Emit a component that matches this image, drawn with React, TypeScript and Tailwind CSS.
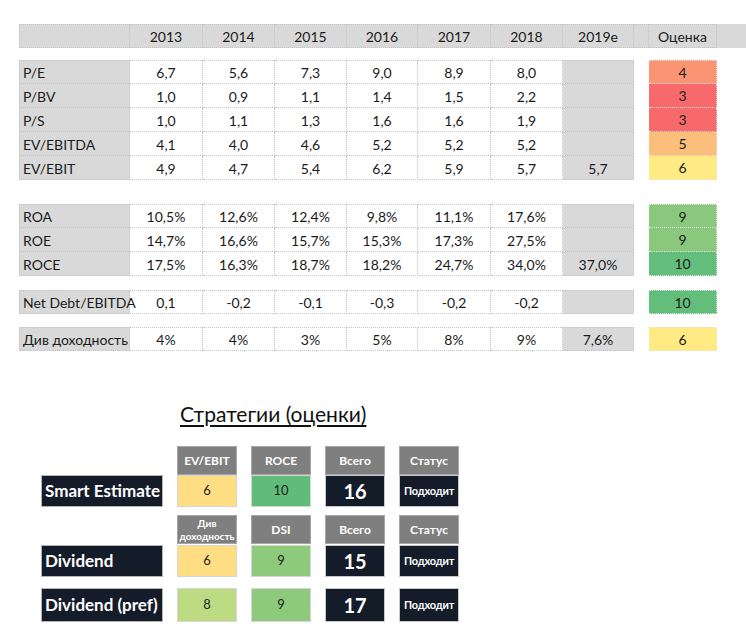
import React from "react";

type Row = [string, string, string, string, string, string, string, string, number];

const colW = [
  "w-[111px]",
  "w-[73px]",
  "w-[72px]",
  "w-[72px]",
  "w-[71px]",
  "w-[73px]",
  "w-[72px]",
  "w-[71px]",
];

const years = ["2013", "2014", "2015", "2016", "2017", "2018", "2019e"];

const rateBg: Record<number, string> = {
  3: "bg-[#f8696b]",
  4: "bg-[#fa9473]",
  5: "bg-[#fbbf7b]",
  6: "bg-[#ffea84]",
  9: "bg-[#8ac97d]",
  10: "bg-[#63be7b]",
};

const dot = "border-dotted border-[#c3c3c3]";

const blocks: Row[][] = [
  [
    ["P/E", "6,7", "5,6", "7,3", "9,0", "8,9", "8,0", "", 4],
    ["P/BV", "1,0", "0,9", "1,1", "1,4", "1,5", "2,2", "", 3],
    ["P/S", "1,0", "1,1", "1,3", "1,6", "1,6", "1,9", "", 3],
    ["EV/EBITDA", "4,1", "4,0", "4,6", "5,2", "5,2", "5,2", "", 5],
    ["EV/EBIT", "4,9", "4,7", "5,4", "6,2", "5,9", "5,7", "5,7", 6],
  ],
  [
    ["ROA", "10,5%", "12,6%", "12,4%", "9,8%", "11,1%", "17,6%", "", 9],
    ["ROE", "14,7%", "16,6%", "15,7%", "15,3%", "17,3%", "27,5%", "", 9],
    ["ROCE", "17,5%", "16,3%", "18,7%", "18,2%", "24,7%", "34,0%", "37,0%", 10],
  ],
  [["Net Debt/EBITDA", "0,1", "-0,2", "-0,1", "-0,3", "-0,2", "-0,2", "", 10]],
  [["Див доходность", "4%", "4%", "3%", "5%", "8%", "9%", "7,6%", 6]],
];

const blockGap = ["mt-3", "mt-6", "mt-[14px]", "mt-[13px]"];

function Block({ rows, first }: { rows: Row[]; first: string }) {
  return (
    <div className={first}>
      {rows.map((r, ri) => {
        const top = ri === 0 ? "border-t" : "";
        return (
          <div key={r[0]} className="flex h-6">
            <div
              className={`${colW[0]} ${top} border-l border-r border-b ${dot} bg-[#d9d9d9] flex items-end pl-[3px] whitespace-nowrap`}
            >
              {r[0]}
            </div>
            {r.slice(1, 7).map((v, i) => (
              <div
                key={i}
                className={`${colW[i + 1]} ${top} border-r border-b ${dot} flex items-center justify-center pt-[1px]`}
              >
                {v}
              </div>
            ))}
            <div
              className={`${colW[7]} ${top} border-r border-b ${dot} bg-[#d9d9d9] flex items-end justify-center`}
            >
              {r[7]}
            </div>
            <div className="w-[15px]" />
            <div
              className={`w-[68px] ${top} border-r border-b border-dotted border-[#e6e6e6] ${rateBg[r[8]]} flex items-center justify-center`}
            >
              {r[8]}
            </div>
          </div>
        );
      })}
    </div>
  );
}

function Head({ children }: { children: React.ReactNode }) {
  return (
    <div className="w-[60px] h-[29px] bg-[#7f7f7f] border border-[#a6a6a6] flex items-center justify-center text-white font-bold text-[12px] leading-none text-center">
      {children}
    </div>
  );
}

function Val({ bg, children }: { bg: string; children: React.ReactNode }) {
  return (
    <div
      className={`w-[60px] h-full ${bg} border border-[#d6d6d6] flex items-center justify-center text-[13px] text-[#1d1d1d]`}
    >
      {children}
    </div>
  );
}

function Dark({ children, cls }: { children: React.ReactNode; cls: string }) {
  return (
    <div
      className={`w-[60px] h-full bg-[#141c2a] border border-[#c8c8c8] flex items-center justify-center text-white font-bold ${cls}`}
    >
      {children}
    </div>
  );
}

function Label({ children }: { children: React.ReactNode }) {
  return (
    <div className="w-[122px] h-full bg-[#141c2a] border border-[#b5b5b5] flex items-center pl-[3px] text-white font-bold text-[17px] whitespace-nowrap">
      {children}
    </div>
  );
}

export default function App() {
  return (
    <div className="w-[746px] h-[643px] bg-white font-['Lato',sans-serif] text-[14px] text-[#1a1a1a] pt-6 pl-[19px]">
      <div className="flex h-6 bg-[#d9d9d9]">
        <div className={`${colW[0]} border-t border-b border-l border-r ${dot}`} />
        {years.map((y, i) => (
          <div
            key={y}
            className={`${colW[i + 1]} border-t border-b border-r ${dot} flex items-center justify-center`}
          >
            {y}
          </div>
        ))}
        <div className={`w-[15px] border-t border-b border-r ${dot}`} />
        <div className={`w-[68px] border-t border-b border-r ${dot} flex items-center justify-center`}>
          Оценка
        </div>
      </div>

      {blocks.map((b, i) => (
        <Block key={i} rows={b} first={blockGap[i]} />
      ))}

      <div className="mt-[50px] ml-[161px] text-[21px] leading-[26px] text-[#111] underline underline-offset-[3px] decoration-[1.5px]">
        Стратегии (оценки)
      </div>

      <div className="ml-[22px] mt-[19px] flex flex-col">
        <div className="flex gap-[14px] h-[29px]">
          <div className="w-[122px]" />
          <Head>EV/EBIT</Head>
          <Head>ROCE</Head>
          <Head>Всего</Head>
          <Head>Статус</Head>
        </div>
        <div className="flex gap-[14px] h-[32px]">
          <Label>Smart Estimate</Label>
          <Val bg="bg-[#ffdd82]">6</Val>
          <Val bg="bg-[#5fbc79]">10</Val>
          <Dark cls="text-[20px]">16</Dark>
          <Dark cls="text-[11px] tracking-[-0.2px]">Подходит</Dark>
        </div>

        <div className="flex gap-[14px] h-[29px] mt-[8px]">
          <div className="w-[122px]" />
          <Head>
            <span className="text-[10px] leading-[13px]">
              Див
              <br />
              доходность
            </span>
          </Head>
          <Head>DSI</Head>
          <Head>Всего</Head>
          <Head>Статус</Head>
        </div>
        <div className="flex gap-[14px] h-[32px] mt-[1px]">
          <Label>Dividend</Label>
          <Val bg="bg-[#ffdd82]">6</Val>
          <Val bg="bg-[#8dca7c]">9</Val>
          <Dark cls="text-[20px]">15</Dark>
          <Dark cls="text-[11px] tracking-[-0.2px]">Подходит</Dark>
        </div>

        <div className="flex gap-[14px] h-[34px] mt-[11px]">
          <Label>Dividend (pref)</Label>
          <Val bg="bg-[#bddb82]">8</Val>
          <Val bg="bg-[#8dca7c]">9</Val>
          <Dark cls="text-[20px]">17</Dark>
          <Dark cls="text-[11px] tracking-[-0.2px]">Подходит</Dark>
        </div>
      </div>
    </div>
  );
}
